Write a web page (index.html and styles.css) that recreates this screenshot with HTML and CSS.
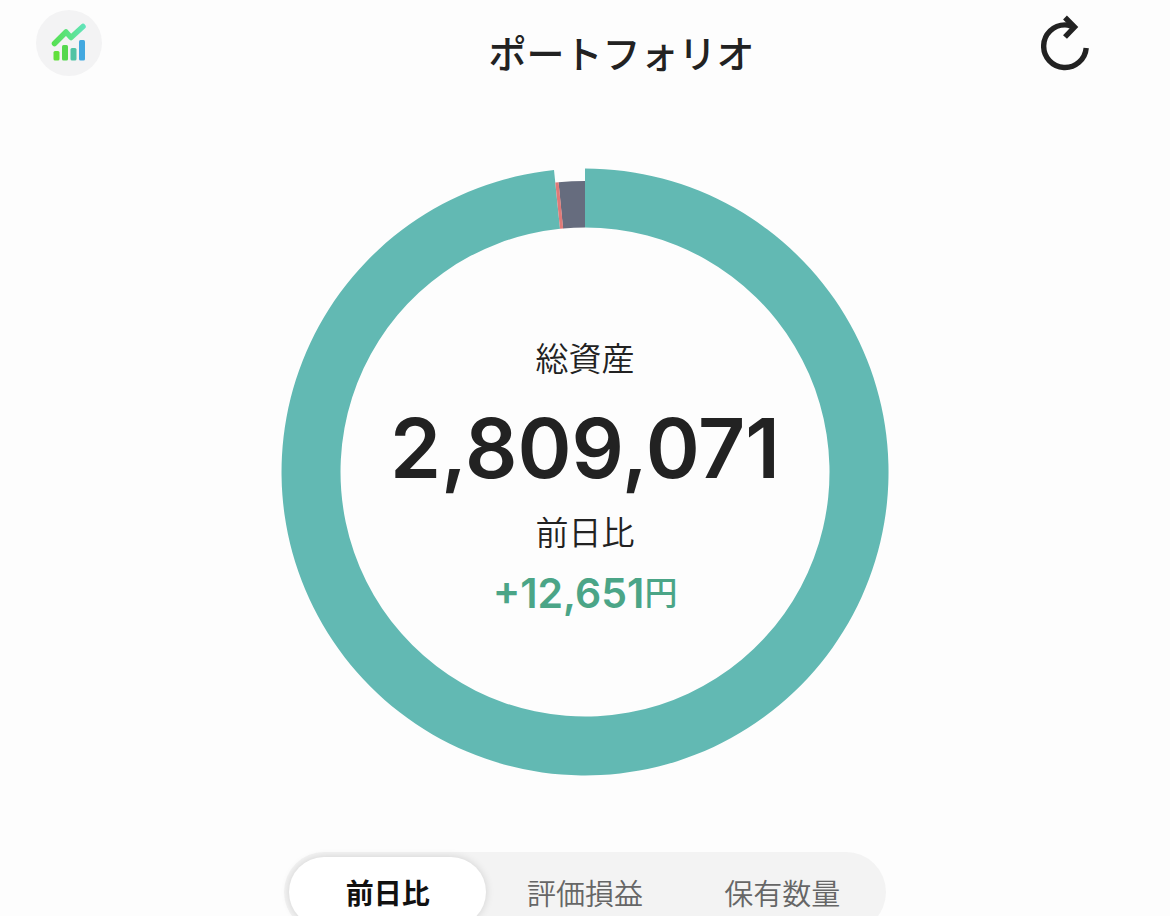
FILE: index.html
```html
<!DOCTYPE html>
<html lang="ja">
<head>
    <meta charset="UTF-8">
    <meta name="viewport" content="width=device-width, initial-scale=1.0">
    <title>ポートフォリオ</title>
    <link rel="stylesheet" href="styles.css">
</head>
<body>
    <header class="header">
        <button class="logo-button" type="button" aria-label="メニュー">
            <svg viewBox="0 0 66 66" width="66" height="66">
                <defs>
                    <linearGradient id="line-color" gradientUnits="userSpaceOnUse" x1="16" y1="0" x2="50" y2="0">
                        <stop offset="0" stop-color="#56e04e"/>
                        <stop offset="0.55" stop-color="#5ce38a"/>
                        <stop offset="1" stop-color="#62e3c0"/>
                    </linearGradient>
                    <linearGradient id="bar-color" gradientUnits="userSpaceOnUse" x1="17" y1="0" x2="49" y2="0">
                        <stop offset="0" stop-color="#62e03c"/>
                        <stop offset="0.4" stop-color="#52d552"/>
                        <stop offset="0.6" stop-color="#50c3a4"/>
                        <stop offset="1" stop-color="#42a3e6"/>
                    </linearGradient>
                </defs>
                <path d="M18.500 33.500L30 22L35 27.500L47 16.500" fill="none" stroke="url(#line-color)" stroke-width="5.500" stroke-linecap="round" stroke-linejoin="round"/>
                <rect x="17.500" y="41" width="6" height="9.500" rx="1.500" fill="#62e03c"/>
                <rect x="26" y="35" width="6" height="15.500" rx="1.500" fill="#54d84e"/>
                <rect x="34.500" y="38" width="6" height="12.500" rx="1.500" fill="#50c3a4"/>
                <rect x="43" y="30" width="6" height="20.500" rx="1.500" fill="#42a8e0"/>
            </svg>
        </button>
        <h1 class="title">ポートフォリオ</h1>
        <button class="refresh-button" type="button" aria-label="更新">
            <svg viewBox="0 0 48 56" width="48" height="56">
                <path d="M45.200 33A21.300 21.300 0 1 1 24 9.900C28 9.900 29 11 33 12" fill="none" stroke="#222" stroke-width="5.400"/>
                <path d="M24 2.500L33.500 12L24 22" fill="none" stroke="#222" stroke-width="5.400"/>
            </svg>
        </button>
    </header>

    <main>
        <section class="chart">
            <svg class="chart-ring" viewBox="0 0 608 608" role="img" aria-label="資産構成">
                <path fill="#62b9b3" d="M304 0.500A303.500 303.500 0 1 1 273 2.090L279.030 60.780A244.500 244.500 0 1 0 304 59.500Z"/>
                <path fill="#666c7e" d="M304 13A291 291 0 0 0 277.500 14.200L282 60.500A244.500 244.500 0 0 1 304 59.500Z"/>
                <path fill="#e07a78" d="M274.300 14.500L277.600 14.200L282.200 60.500L279 60.800Z"/>
            </svg>
            <div class="chart-text">
                <p class="label">総資産</p>
                <p class="total">2,809,071</p>
                <p class="label">前日比</p>
                <p class="change">+12,651<span class="yen">円</span></p>
            </div>
        </section>

        <nav class="tabs">
            <button class="tab active" type="button">前日比</button>
            <button class="tab" type="button">評価損益</button>
            <button class="tab" type="button">保有数量</button>
        </nav>
    </main>
</body>
</html>
```
FILE: styles.css
```css
* {
    box-sizing: border-box;
}

body {
    margin: 0;
    height: 100vh;
    overflow: hidden;
    background-color: #fdfdfd;
    color: #222;
    font-family: Inter, "Noto Sans CJK JP", sans-serif;
}

button {
    padding: 0;
    border: none;
    background: none;
    font-family: inherit;
    cursor: pointer;
}

svg {
    display: block;
}

/* ヘッダー */
.header {
    display: flex;
    align-items: flex-start;
    padding: 10px 81px 0 36px;
}

.logo-button {
    border-radius: 50%;
    background-color: #f3f3f4;
}

.title {
    flex: 1;
    margin: 0;
    padding: 16px 0 0 100px;
    font-size: 38px;
    line-height: 56px;
    font-weight: 500;
    text-align: center;
}

.refresh-button {
    padding-top: 5px;
}

/* 円グラフ */
.chart {
    display: grid;
    max-width: 608px;
    margin: 86px auto 0;
}

.chart-ring,
.chart-text {
    grid-area: 1 / 1;
}

.chart-ring {
    width: 100%;
}

.chart-text {
    align-self: center;
    padding-top: 8px;
    text-align: center;
}

.chart-text p {
    margin: 0;
}

.chart-text .label {
    font-size: 33px;
    line-height: 48px;
    font-weight: 350;
}

.chart-text .total {
    margin: 18px 0 12px;
    font-size: 82px;
    line-height: 96px;
    font-weight: 600;
}

.chart-text .change {
    margin-top: 12px;
    color: #4ba587;
    font-size: 41px;
    line-height: 48px;
    font-weight: 600;
}

.yen {
    font-size: 33px;
    line-height: 1;
    font-weight: 500;
    vertical-align: 3px;
}

/* タブ */
.tabs {
    display: grid;
    grid-template-columns: repeat(3, 1fr);
    max-width: 602px;
    margin: 76px auto 0;
    padding: 5px;
    border-radius: 40px;
    background-color: #f3f3f3;
}

.tab {
    height: 70px;
    border-radius: 35px;
    color: #666;
    font-size: 29px;
    font-weight: 350;
}

.tab.active {
    background-color: #fff;
    box-shadow: 0 0 8px rgba(0, 0, 0, 0.14);
    color: #111;
    font-size: 28px;
    font-weight: 700;
}
```
